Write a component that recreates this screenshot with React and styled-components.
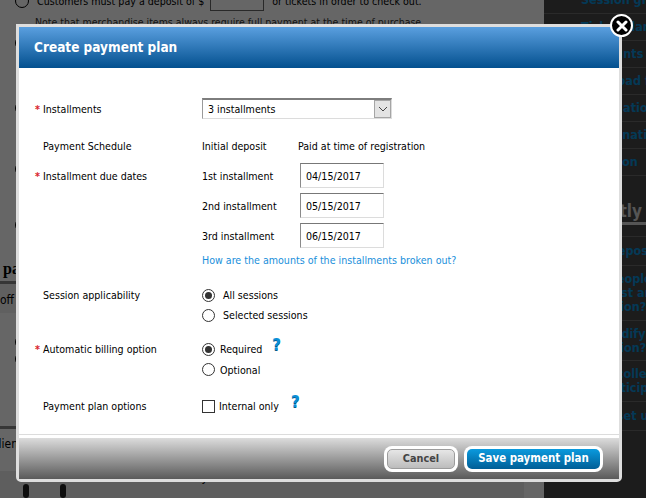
import React from 'react';
import styled, { createGlobalStyle } from 'styled-components';

const TAHOMA = `"DejaVu Sans Condensed", "DejaVu Sans", sans-serif`;

const GlobalStyle = createGlobalStyle`
  html, body {
    margin: 0;
    padding: 0;
    height: 100%;
    overflow: hidden;
    background: #fff;
  }
  * { box-sizing: border-box; }
`;

const SIDE_LINKS_TOP = [
  'Session groups',
  'Ticket plan',
  'Discounts',
  'Workload fees',
  'Information',
  'Coordination',
  'Question',
];

const SIDE_LINKS_BOTTOM = [
  { lines: ['Add deposit'], h: 29 },
  { lines: ['Can people', 'Request amount', 'a session?'], h: 55 },
  { lines: ['Do modify a', 'a session?'], h: 40 },
  { lines: ['Can I collect', 'Of participants'], h: 41 },
  { lines: ['Can I set up'], h: 29 },
];

const PLAN_DATES = [
  ['1st installment', '04/15/2017'],
  ['2nd installment', '05/15/2017'],
  ['3rd installment', '06/15/2017'],
];

function App() {
  return (
    <Page>
      <GlobalStyle />
      <Main>
        <BackLine $h={15}>
          <BackRadio />
          <span>Customers must pay a deposit of $</span>
          <BackInput />
          <span>or tickets in order to check out.</span>
        </BackLine>
        <BackNote>Note that merchandise items always require full payment at the time of purchase.</BackNote>
        <BackLine $h={24} $mt={2}><BackRadio /></BackLine>
        <BackLine $h={24} $mt={42}><BackRadio /></BackLine>
        <BackLine $h={24} $mt={38}><BackRadio /></BackLine>
        <BackLine $h={24} $mt={33}><BackRadio /></BackLine>
        <BackHeading>payment</BackHeading>
        <BackBand>off</BackBand>
        <BackLine $h={18} $mt={20}><BackRadio /></BackLine>
        <BackLine $h={18}><BackRadio /></BackLine>
        <BackRule />
        <BackClient>Client</BackClient>
        <BackPanel>
          <BackFeature>With this feature you can</BackFeature>
          <BackHandles>
            <span />
            <span />
          </BackHandles>
        </BackPanel>
      </Main>
      <Sidebar>
        <SideList>
          {SIDE_LINKS_TOP.map((text) => (
            <SideItem key={text} $h={27}>{text}</SideItem>
          ))}
        </SideList>
        <SideHeading>Frequently asked</SideHeading>
        <SideList>
          {SIDE_LINKS_BOTTOM.map((item) => (
            <SideItem key={item.lines[0]} $h={item.h}>
              {item.lines.map((line) => <div key={line}>{line}</div>)}
            </SideItem>
          ))}
        </SideList>
      </Sidebar>

      <Overlay />
      <Modal>
        <CloseButton aria-label="Close">
          <svg width="12" height="12" viewBox="0 0 12 12">
            <path d="M2 2 L10 10 M10 2 L2 10" stroke="#fff" strokeWidth="3" strokeLinecap="round" />
          </svg>
        </CloseButton>
        <Header>Create payment plan</Header>
        <Form>
          <Row $mt={30}>
            <Label $required $h={21} $drop={1}>Installments</Label>
            <SelectBox>
              <span>3 installments</span>
              <SelectArrow>
                <svg width="10" height="6" viewBox="0 0 10 6">
                  <path d="M1 1 L5 5 L9 1" fill="none" stroke="#444" strokeWidth="1" />
                </svg>
              </SelectArrow>
            </SelectBox>
          </Row>

          <Row $mt={17}>
            <Label $h={20}>Payment Schedule</Label>
            <DateRow $h={20}>
              <DateName $w={96}>Initial deposit</DateName>
              <span>Paid at time of registration</span>
            </DateRow>
          </Row>

          <Row $mt={7}>
            <Label $required $h={25} $drop={1}>Installment due dates</Label>
            <DateList>
              {PLAN_DATES.map(([name, value]) => (
                <DateRow key={name} $h={25}>
                  <DateName $w={98}>{name}</DateName>
                  <DateInput defaultValue={value} />
                </DateRow>
              ))}
              <HelpLink href="#">How are the amounts of the installments broken out?</HelpLink>
            </DateList>
          </Row>

          <Row $mt={15}>
            <Label $h={20}>Session applicability</Label>
            <Options>
              <Option $gap={7} $h={20}><Radio $checked />All sessions</Option>
              <Option $gap={7} $h={20}><Radio />Selected sessions</Option>
            </Options>
          </Row>

          <Row $mt={14}>
            <Label $required $h={20}>Automatic billing option</Label>
            <Options>
              <Option $gap={4} $h={20}>
                <Radio $checked />Required<Help $left={6}>?</Help>
              </Option>
              <Option $gap={4} $h={21}><Radio />Optional</Option>
            </Options>
          </Row>

          <Row $mt={16}>
            <Label $h={20}>Payment plan options</Label>
            <Option $gap={4} $h={20}>
              <Checkbox />Internal only<Help $left={8}>?</Help>
            </Option>
          </Row>
        </Form>
        <Divider />
        <Footer>
          <FooterButton>
            <CancelFace>Cancel</CancelFace>
          </FooterButton>
          <FooterButton>
            <SaveFace>Save payment plan</SaveFace>
          </FooterButton>
        </Footer>
      </Modal>
    </Page>
  );
}

const Page = styled.div`
  display: grid;
  grid-template-columns: 544px 102px;
  width: 646px;
  height: 498px;
  overflow: hidden;
  font-family: ${TAHOMA};
  font-size: 10.6px;
  color: #000;
`;

const Main = styled.div`
  display: flex;
  flex-direction: column;
  margin-top: -7px;
  height: 505px;
  background: #fff;
  overflow: hidden;
`;

const BackLine = styled.div`
  display: flex;
  align-items: center;
  gap: 6px;
  height: ${(p) => p.$h}px;
  margin-top: ${(p) => p.$mt || 0}px;
  padding-left: 15px;
  white-space: nowrap;
`;

const BackRadio = styled.span`
  width: 14px;
  height: 14px;
  border: 1px solid #000;
  border-radius: 50%;
  flex: none;
  margin-right: 2px;
`;

const BackInput = styled.span`
  width: 54px;
  height: 20px;
  border: 1px solid #666;
  margin: 0 2px 0 0;
`;

const BackNote = styled.div`
  margin-top: 8px;
  padding-left: 35px;
  height: 14px;
  color: #333;
  font-size: 10.5px;
  white-space: nowrap;
`;

const BackHeading = styled.div`
  margin-top: 23px;
  height: 22px;
  padding-left: 3px;
  font-family: "Liberation Serif", serif;
  font-weight: bold;
  font-size: 16px;
`;

const BackBand = styled.div`
  height: 32px;
  line-height: 32px;
  border-top: 3px solid #888;
  background: #f0f0f0;
  font-size: 12px;
`;

const BackRule = styled.div`
  height: 3px;
  margin-top: 58px;
  background: #888;
`;

const BackClient = styled.div`
  margin-top: 8px;
  height: 15px;
  font-size: 12px;
  text-indent: -9px;
`;

const BackPanel = styled.div`
  flex: 1;
  margin: 20px 20px 0 0;
  background: #ececec;
`;

const BackFeature = styled.div`
  height: 13px;
  padding-left: 108px;
  font-size: 12px;
  line-height: 13px;
`;

const BackHandles = styled.div`
  display: flex;
  gap: 31px;
  padding-left: 23px;

  span {
    width: 6px;
    height: 14px;
    border-radius: 3px;
    background: #222;
  }
`;

const Sidebar = styled.div`
  margin-top: -14px;
  height: 512px;
  background: #464646;
  color: #0a8fd8;
  font-weight: bold;
  font-size: 12.5px;
  white-space: nowrap;
  overflow: hidden;
`;

const SideList = styled.div`
  border-top: 1px solid #6a6a6a;
`;

const SideItem = styled.div`
  height: ${(p) => p.$h}px;
  padding-left: 37px;
  border-bottom: 1px solid #6a6a6a;
  display: flex;
  flex-direction: column;
  justify-content: center;
  line-height: 14px;
`;

const SideHeading = styled.div`
  margin: 22px 0 11px;
  height: 27px;
  padding-left: 5px;
  color: #d4d4d4;
  font-size: 17px;
  line-height: 26px;
  border-bottom: 3px solid #d4d4d4;
`;

const Overlay = styled.div`
  position: fixed;
  inset: 0;
  background: rgba(0, 0, 0, 0.6);
`;

const Modal = styled.div`
  position: fixed;
  left: 16px;
  top: 24px;
  width: 606px;
  height: 458px;
  display: flex;
  flex-direction: column;
  background: #fff;
  border: 3px solid #dedede;
  border-radius: 0 0 5px 5px;
`;

const CloseButton = styled.button`
  position: absolute;
  top: -13px;
  right: -14px;
  width: 23px;
  height: 23px;
  padding: 0;
  display: grid;
  place-items: center;
  background: #000;
  border: 2px solid #fff;
  border-radius: 50%;
`;

const Header = styled.div`
  flex: none;
  height: 41px;
  line-height: 41px;
  padding-left: 15px;
  background: linear-gradient(#5a9fdf, #03508f);
  color: #fff;
  font-weight: bold;
  font-size: 13.5px;
`;

const Form = styled.div`
  flex: 1;
  display: flex;
  flex-direction: column;
  padding-left: 24px;
`;

const Row = styled.div`
  display: grid;
  grid-template-columns: 159px 1fr;
  margin-top: ${(p) => p.$mt}px;
`;

const Label = styled.div`
  height: ${(p) => p.$h}px;
  padding-top: ${(p) => p.$drop || 0}px;
  line-height: ${(p) => p.$h}px;

  &::before {
    content: ${(p) => (p.$required ? '"*"' : 'none')};
    display: inline-block;
    width: 8px;
    margin-left: -8px;
    color: #d8232a;
    font-weight: bold;
  }
`;

const SelectBox = styled.div`
  display: flex;
  align-items: center;
  justify-content: space-between;
  width: 190px;
  height: 21px;
  padding: 0 0 0 5px;
  border: 1px solid #dcdcdc;
  border-top: 2px solid #7d7d7d;
  border-left: 1px solid #9a9a9a;
`;

const SelectArrow = styled.span`
  display: grid;
  place-items: center;
  width: 17px;
  height: 18px;
  background: #e3e3e3;
  border: 1px solid #a5a5a5;
`;

const DateList = styled.div`
  display: flex;
  flex-direction: column;
  gap: 5px;
`;

const DateRow = styled.div`
  display: flex;
  align-items: center;
  height: ${(p) => p.$h}px;
`;

const DateName = styled.span`
  width: ${(p) => p.$w}px;
`;

const DateInput = styled.input`
  width: 84px;
  height: 25px;
  padding: 0 5px;
  font: inherit;
  color: #000;
  border: 1px solid #dcdcdc;
  border-top: 1px solid #777;
  border-left: 1px solid #8a8a8a;
  outline: none;
`;

const HelpLink = styled.a`
  margin-top: -3px;
  height: 20px;
  line-height: 20px;
  color: #1a8fdb;
  text-decoration: none;
`;

const Options = styled.div`
  display: flex;
  flex-direction: column;
`;

const Option = styled.label`
  display: flex;
  align-items: center;
  gap: ${(p) => p.$gap}px;
  height: ${(p) => p.$h}px;
`;

const Radio = styled.span`
  display: grid;
  place-items: center;
  width: 13px;
  height: 13px;
  margin-right: 1px;
  border: 1px solid #333;
  border-radius: 50%;

  &::after {
    content: '';
    display: ${(p) => (p.$checked ? 'block' : 'none')};
    width: 7px;
    height: 7px;
    border-radius: 50%;
    background: #333;
  }
`;

const Checkbox = styled.span`
  width: 13px;
  height: 13px;
  border: 1px solid #333;
`;

const Help = styled.span`
  margin-left: ${(p) => p.$left}px;
  margin-top: -8px;
  font-family: "DejaVu Sans", sans-serif;
  font-weight: bold;
  font-size: 15px;
  line-height: 14px;
  color: #0b8fd6;
  text-shadow: 0 1px 0 #045a8c;
`;

const Divider = styled.div`
  flex: none;
  height: 1px;
  background: #dcdcdc;
  margin-bottom: 3px;
`;

const Footer = styled.div`
  flex: none;
  height: 41px;
  display: flex;
  align-items: center;
  justify-content: flex-end;
  gap: 6px;
  padding-right: 16px;
  background: linear-gradient(#dcdcdc, #5a5a5a);
`;

const FooterButton = styled.button`
  display: block;
  padding: 3px;
  height: 26px;
  background: #fff;
  border: none;
  border-radius: 8px;
  font-family: ${TAHOMA};
`;

const CancelFace = styled.span`
  display: block;
  width: 68px;
  height: 20px;
  line-height: 17px;
  background: linear-gradient(#e6e6e6, #bcbcbc);
  border: 1px solid #9c9c9c;
  border-radius: 5px;
  color: #444;
  font-weight: bold;
  font-size: 10.8px;
`;

const SaveFace = styled.span`
  display: block;
  width: 133px;
  height: 20px;
  line-height: 19px;
  background: linear-gradient(#0a9ade, #005e96);
  border-radius: 5px;
  color: #fff;
  font-weight: bold;
  font-size: 11.4px;
`;

export default App;
